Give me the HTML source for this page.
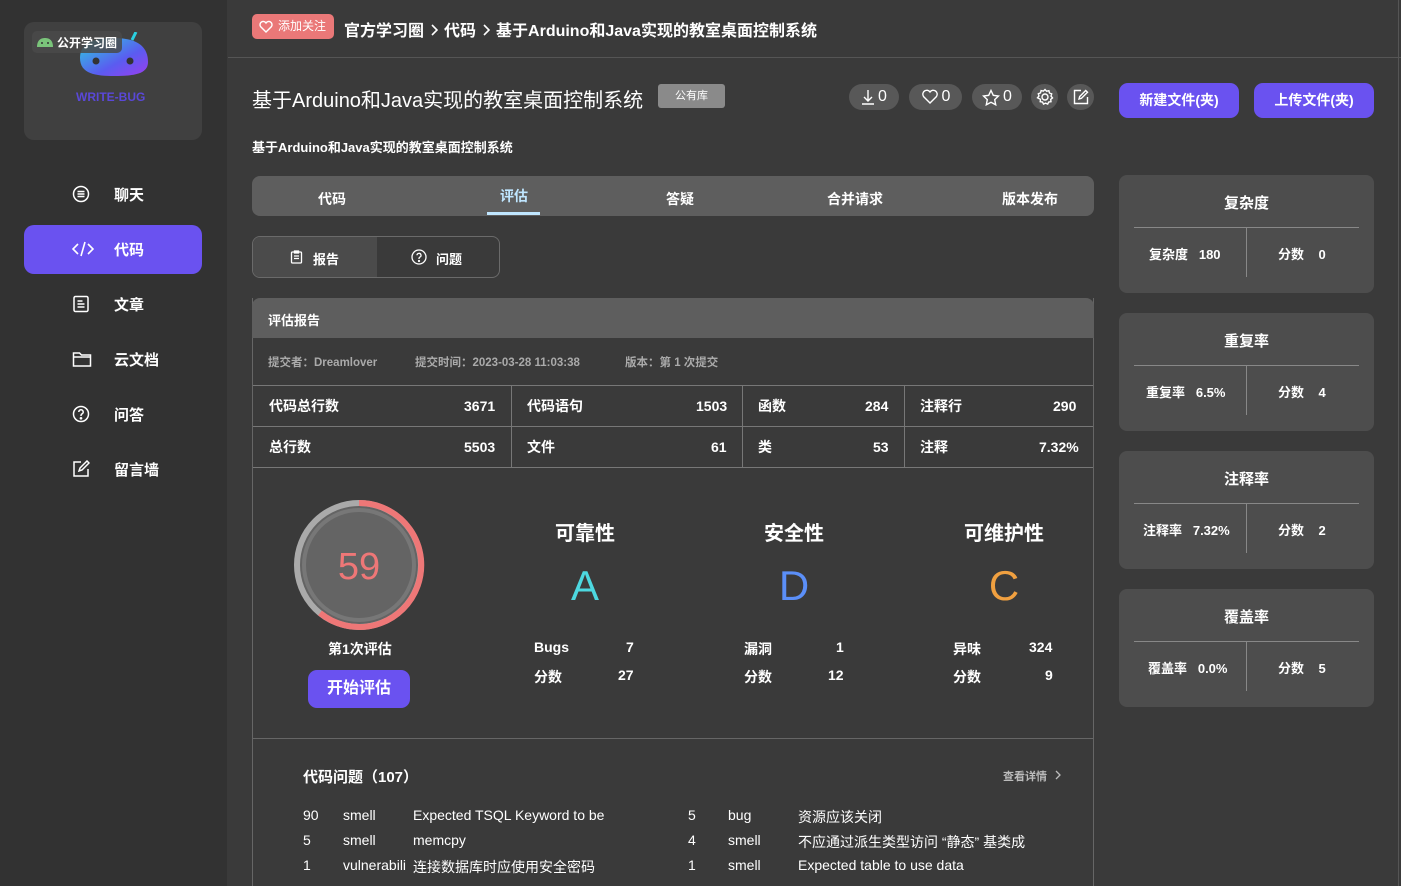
<!DOCTYPE html>
<html><head><meta charset="utf-8"><style>
*{margin:0;padding:0;box-sizing:border-box}
html,body{width:1401px;height:886px;overflow:hidden}
body{background:#3a3a3a;font-family:"Liberation Sans","Noto Sans CJK SC",sans-serif;color:#fff;position:relative}
.a{position:absolute}
.side{left:0;top:0;width:227px;height:886px;background:#323232}
.nav{left:24px;width:178px;height:49px;border-radius:10px;font-size:15px;font-weight:bold}
.nav svg{position:absolute;left:48px;top:15px}
.nav span{position:absolute;left:90px;top:14px}
.pill{height:26px;border-radius:13px;background:#585858;font-size:16px;display:flex;align-items:center;justify-content:center;gap:3px}
.btn{background:#6a52f0;border-radius:9px;font-size:14px;font-weight:bold;text-align:center;line-height:35px}
.card{left:1119px;width:255px;height:118px;background:#4d4d4d;border-radius:8px}
.card .t{position:absolute;top:17px;width:100%;text-align:center;font-size:15px;font-weight:bold}
.card .l{position:absolute;left:15px;right:15px;top:52px;border-top:1px solid #888}
.card .v{position:absolute;left:127px;top:52px;height:50px;border-left:1px solid #888}
.card .c{position:absolute;top:69px;font-size:13px;font-weight:bold}
.td{font-size:14px;font-weight:bold;top:0;line-height:40px}
.gr{font-size:22px;font-weight:bold;width:200px;text-align:center}
.sm{font-size:14px;font-weight:bold}
.iss{font-size:14px}
.chev{display:inline-block;margin:0 6px;font-weight:normal}
</style></head><body>
<div class="a side"></div>
<div class="a" style="left:24px;top:22px;width:178px;height:118px;background:#404040;border-radius:10px"></div>
<svg class="a" style="left:78px;top:32px" width="72" height="48"><defs><linearGradient id="g" x1="0" y1="0" x2="1" y2="1"><stop offset="0" stop-color="#2ad0e0"/><stop offset="0.6" stop-color="#5a5cf0"/><stop offset="1" stop-color="#9a3ef0"/></linearGradient></defs><path d="M2 26 C2 8 22 6 36 6 C52 6 70 10 70 30 C70 42 56 44 36 44 C18 44 2 42 2 26Z" fill="url(#g)"/><circle cx="18" cy="29" r="3.5" fill="#333"/><circle cx="52" cy="29" r="3.5" fill="#333"/><line x1="54" y1="8" x2="58" y2="0" stroke="#2ad0e0" stroke-width="3"/></svg>
<div class="a" style="left:32px;top:31px;width:90px;height:22px;background:rgba(74,74,74,0.85);border-radius:5px"></div>
<svg class="a" style="left:36px;top:36px" width="18" height="12"><path d="M1 11 C1 4 5 2 9 2 C13 2 17 4 17 11Z" fill="#7ac47a"/><circle cx="6" cy="7" r="1" fill="#333"/><circle cx="12" cy="7" r="1" fill="#333"/></svg>
<div class="a" style="left:57px;top:34px;font-size:12px;font-weight:bold">公开学习圈</div>
<div class="a" style="left:76px;top:90px;font-size:12px;font-weight:bold;color:#5a48d8">WRITE-BUG</div>

<div class="a nav" style="top:170px"><svg width="18" height="18" fill="none" stroke="#fff" stroke-width="1.5"><circle cx="9" cy="9" r="7.5"/><path d="M5.5 6.5h7M5.5 9h7M5.5 11.5h7"/></svg><span>聊天</span></div>
<div class="a nav" style="top:225px;background:#6a52f0"><svg width="22" height="18" fill="none" stroke="#fff" stroke-width="1.6"><path d="M6 4L1 9l5 5M16 4l5 5-5 5M13 2L9 16"/></svg><span>代码</span></div>
<div class="a nav" style="top:280px"><svg width="18" height="18" fill="none" stroke="#fff" stroke-width="1.5"><rect x="2" y="1.5" width="14" height="15" rx="1.5"/><path d="M5.5 6h5M5.5 9h7M5.5 12h7"/></svg><span>文章</span></div>
<div class="a nav" style="top:335px"><svg width="20" height="18" fill="none" stroke="#fff" stroke-width="1.5"><path d="M1.5 3h6l2 2h9v11h-17z M1.5 7h17"/></svg><span>云文档</span></div>
<div class="a nav" style="top:390px"><svg width="18" height="18" fill="none" stroke="#fff" stroke-width="1.5"><circle cx="9" cy="9" r="7.5"/><path d="M6.8 7a2.2 2.2 0 1 1 3 2c-.8.4-.8 1-.8 2"/><circle cx="9" cy="13.3" r=".6" fill="#fff"/></svg><span>问答</span></div>
<div class="a nav" style="top:445px"><svg width="18" height="18" fill="none" stroke="#fff" stroke-width="1.5"><path d="M9 2H2v14h14V9M7 11l1-3 7-7 2 2-7 7z"/></svg><span>留言墙</span></div>

<div class="a" style="left:228px;top:57px;width:1173px;border-top:1px solid #555"></div>
<div class="a" style="left:1398px;top:0;height:886px;border-left:1px solid #555"></div>
<div class="a" style="left:252px;top:14px;width:82px;height:25px;background:#ea7878;border-radius:5px;font-size:12px;line-height:25px;padding-left:26px">添加关注</div>
<svg class="a" style="left:259px;top:20px" width="14" height="13" fill="none" stroke="#fff" stroke-width="1.4"><path d="M7 12L1.5 6.5a3 3 0 0 1 5.5-3.5 3 3 0 0 1 5.5 3.5z"/></svg>
<div class="a" style="left:344px;top:17px;font-size:16px;font-weight:bold">官方学习圈<svg class="chev" width="8" height="12" fill="none" stroke="#fff" stroke-width="1.6"><path d="M2 1l5 5-5 5"/></svg>代码<svg class="chev" width="8" height="12" fill="none" stroke="#fff" stroke-width="1.6"><path d="M2 1l5 5-5 5"/></svg>基于Arduino和Java实现的教室桌面控制系统</div>

<div class="a" style="left:252px;top:84px;font-size:20px">基于Arduino和Java实现的教室桌面控制系统</div>
<div class="a" style="left:658px;top:84px;width:67px;height:24px;background:#8a8a8a;border-radius:3px;font-size:11px;text-align:center;line-height:24px">公有库</div>
<div class="a" style="left:252px;top:137px;font-size:13px;font-weight:bold">基于Arduino和Java实现的教室桌面控制系统</div>

<div class="a pill" style="left:849px;top:84px;width:50px"><svg width="14" height="16" fill="none" stroke="#fff" stroke-width="1.4"><path d="M7 1v11M3 8l4 4 4-4M1 15h12"/></svg>0</div>
<div class="a pill" style="left:909px;top:84px;width:53px"><svg width="18" height="16" fill="none" stroke="#fff" stroke-width="1.4"><path d="M9 14L2.5 7.5a3.6 3.6 0 0 1 6.5-4.5 3.6 3.6 0 0 1 6.5 4.5z"/></svg>0</div>
<div class="a pill" style="left:972px;top:84px;width:50px"><svg width="18" height="17" fill="none" stroke="#fff" stroke-width="1.4"><path d="M9 1.5l2.3 4.8 5.2.7-3.8 3.6 1 5.2L9 13.3l-4.7 2.5 1-5.2L1.5 7l5.2-.7z"/></svg>0</div>
<div class="a pill" style="left:1031px;top:84px;width:27px"><svg width="18" height="18" fill="none" stroke="#fff" stroke-width="1.4"><circle cx="9" cy="9" r="3"/><path d="M9 1.5l1.6 1.7 2.3-.5.6 2.3 2.2.9-.7 2.2 1.5 1.8-1.8 1.5.3 2.3-2.3.3-1 2.1-2.1-1-2.1 1-1-2.1-2.3-.3.3-2.3L1.5 9.8 3 8l-.7-2.2 2.2-.9.6-2.3 2.3.5z"/></svg></div>
<div class="a pill" style="left:1067px;top:84px;width:27px"><svg width="16" height="16" fill="none" stroke="#fff" stroke-width="1.4"><path d="M8 1.5H1.5v13h13V8M6 10l.7-2.5 6-6 1.8 1.8-6 6z"/></svg></div>
<div class="a btn" style="left:1119px;top:83px;width:120px">新建文件(夹)</div>
<div class="a btn" style="left:1254px;top:83px;width:120px">上传文件(夹)</div>

<div class="a" style="left:252px;top:176px;width:842px;height:40px;background:#5e5e5e;border-radius:8px"></div>
<div class="a sm" style="left:318px;top:189px">代码</div>
<div class="a sm" style="left:500px;top:186px;color:#bfe6ff">评估</div>
<div class="a" style="left:487px;top:212px;width:53px;height:3px;background:#bfe6ff"></div>
<div class="a sm" style="left:666px;top:189px">答疑</div>
<div class="a sm" style="left:827px;top:189px">合并请求</div>
<div class="a sm" style="left:1002px;top:189px">版本发布</div>

<div class="a" style="left:252px;top:236px;width:248px;height:42px;border:1px solid #6a6a6a;border-radius:8px;overflow:hidden"><div style="width:124px;height:100%;background:#4b4b4b"></div></div>
<svg class="a" style="left:290px;top:250px" width="13" height="14" fill="none" stroke="#fff" stroke-width="1.3"><rect x="1.5" y="2" width="10" height="11" rx="1"/><path d="M4.5 1h4v2h-4zM4 6h5M4 8.5h5"/></svg>
<div class="a" style="left:313px;top:249px;font-size:13px;font-weight:bold">报告</div>
<svg class="a" style="left:411px;top:249px" width="16" height="16" fill="none" stroke="#fff" stroke-width="1.3"><circle cx="8" cy="8" r="7"/><path d="M6 6.3a2 2 0 1 1 2.7 1.9c-.7.3-.7.8-.7 1.8"/><circle cx="8" cy="12" r=".5" fill="#fff"/></svg>
<div class="a" style="left:436px;top:249px;font-size:13px;font-weight:bold">问题</div>

<div class="a" style="left:252px;top:298px;width:842px;height:600px;border:1px solid #666;border-top:none"></div>
<div class="a" style="left:252px;top:298px;width:842px;height:40px;background:#5e5e5e;border-radius:8px 8px 0 0"></div>
<div class="a" style="left:268px;top:310px;font-size:13px;font-weight:bold">评估报告</div>
<div class="a" style="left:268px;top:354px;font-size:11.5px;font-weight:bold;color:#aaa">提交者：Dreamlover</div>
<div class="a" style="left:415px;top:354px;font-size:11.5px;font-weight:bold;color:#aaa">提交时间：2023-03-28 11:03:38</div>
<div class="a" style="left:625px;top:354px;font-size:11.5px;font-weight:bold;color:#aaa">版本：第 1 次提交</div>
<div class="a" style="left:253px;top:385px;width:840px;height:83px;border-top:1px solid #777;border-bottom:1px solid #777"></div>
<div class="a" style="left:253px;top:426px;width:840px;border-top:1px solid #777"></div>
<div class="a" style="left:511px;top:385px;height:83px;border-left:1px solid #777"></div>
<div class="a" style="left:742px;top:385px;height:83px;border-left:1px solid #777"></div>
<div class="a" style="left:904px;top:385px;height:83px;border-left:1px solid #777"></div>
<div class="a td" style="left:269px;top:386px">代码总行数</div><div class="a td" style="left:464px;top:386px">3671</div>
<div class="a td" style="left:527px;top:386px">代码语句</div><div class="a td" style="left:696px;top:386px">1503</div>
<div class="a td" style="left:758px;top:386px">函数</div><div class="a td" style="left:865px;top:386px">284</div>
<div class="a td" style="left:920px;top:386px">注释行</div><div class="a td" style="left:1053px;top:386px">290</div>
<div class="a td" style="left:269px;top:427px">总行数</div><div class="a td" style="left:464px;top:427px">5503</div>
<div class="a td" style="left:527px;top:427px">文件</div><div class="a td" style="left:711px;top:427px">61</div>
<div class="a td" style="left:758px;top:427px">类</div><div class="a td" style="left:873px;top:427px">53</div>
<div class="a td" style="left:920px;top:427px">注释</div><div class="a td" style="left:1039px;top:427px">7.32%</div>

<svg class="a" style="left:292px;top:497px" width="136" height="136"><circle cx="67" cy="68" r="62" fill="#646464" stroke="#aaa" stroke-width="6"/><circle cx="67" cy="68" r="55" fill="none" stroke="#777" stroke-width="4"/><path d="M67 6 A62 62 0 1 1 28 116" fill="none" stroke="#ee7777" stroke-width="6"/><text x="67" y="82" text-anchor="middle" font-size="38" fill="#ee7777" font-family="Liberation Sans,sans-serif">59</text></svg>
<div class="a sm" style="left:328px;top:639px">第1次评估</div>
<div class="a btn" style="left:308px;top:670px;width:102px;height:38px;line-height:38px;font-size:16px">开始评估</div>

<div class="a gr" style="left:485px;top:517px;font-size:20px">可靠性</div>
<div class="a" style="left:485px;top:562px;width:200px;text-align:center;font-size:42px;color:#4dd8e0">A</div>
<div class="a sm" style="left:534px;top:639px">Bugs</div><div class="a sm" style="left:626px;top:639px">7</div>
<div class="a sm" style="left:534px;top:667px">分数</div><div class="a sm" style="left:618px;top:667px">27</div>

<div class="a gr" style="left:694px;top:517px;font-size:20px">安全性</div>
<div class="a" style="left:694px;top:562px;width:200px;text-align:center;font-size:42px;color:#5b8ff8">D</div>
<div class="a sm" style="left:744px;top:639px">漏洞</div><div class="a sm" style="left:836px;top:639px">1</div>
<div class="a sm" style="left:744px;top:667px">分数</div><div class="a sm" style="left:828px;top:667px">12</div>

<div class="a gr" style="left:904px;top:517px;font-size:20px">可维护性</div>
<div class="a" style="left:904px;top:562px;width:200px;text-align:center;font-size:42px;color:#f0a040">C</div>
<div class="a sm" style="left:953px;top:639px">异味</div><div class="a sm" style="left:1029px;top:639px">324</div>
<div class="a sm" style="left:953px;top:667px">分数</div><div class="a sm" style="left:1045px;top:667px">9</div>

<div class="a" style="left:253px;top:738px;width:840px;border-top:1px solid #666"></div>
<div class="a" style="left:303px;top:766px;font-size:15px;font-weight:bold">代码问题（107）</div>
<div class="a" style="left:1003px;top:768px;font-size:11px;color:#bbb;font-weight:bold">查看详情 <svg width="8" height="10" fill="none" stroke="#bbb" stroke-width="1.3" style="margin-left:4px"><path d="M2 1l4 4-4 4"/></svg></div>
<div class="a iss" style="left:303px;top:807px">90</div><div class="a iss" style="left:343px;top:807px">smell</div><div class="a iss" style="left:413px;top:807px">Expected TSQL Keyword to be</div>
<div class="a iss" style="left:303px;top:832px">5</div><div class="a iss" style="left:343px;top:832px">smell</div><div class="a iss" style="left:413px;top:832px">memcpy</div>
<div class="a iss" style="left:303px;top:857px">1</div><div class="a iss" style="left:343px;top:857px">vulnerabili</div><div class="a iss" style="left:413px;top:857px">连接数据库时应使用安全密码</div>
<div class="a iss" style="left:688px;top:807px">5</div><div class="a iss" style="left:728px;top:807px">bug</div><div class="a iss" style="left:798px;top:807px">资源应该关闭</div>
<div class="a iss" style="left:688px;top:832px">4</div><div class="a iss" style="left:728px;top:832px">smell</div><div class="a iss" style="left:798px;top:832px">不应通过派生类型访问 “静态” 基类成</div>
<div class="a iss" style="left:688px;top:857px">1</div><div class="a iss" style="left:728px;top:857px">smell</div><div class="a iss" style="left:798px;top:857px">Expected table to use data</div>

<div class="a card" style="top:175px"><div class="t">复杂度</div><div class="l"></div><div class="v"></div><div class="c" style="left:30px">复杂度&nbsp;&nbsp;&nbsp;180</div><div class="c" style="left:159px">分数&nbsp;&nbsp;&nbsp;&nbsp;0</div></div>
<div class="a card" style="top:313px"><div class="t">重复率</div><div class="l"></div><div class="v"></div><div class="c" style="left:27px">重复率&nbsp;&nbsp;&nbsp;6.5%</div><div class="c" style="left:159px">分数&nbsp;&nbsp;&nbsp;&nbsp;4</div></div>
<div class="a card" style="top:451px"><div class="t">注释率</div><div class="l"></div><div class="v"></div><div class="c" style="left:24px">注释率&nbsp;&nbsp;&nbsp;7.32%</div><div class="c" style="left:159px">分数&nbsp;&nbsp;&nbsp;&nbsp;2</div></div>
<div class="a card" style="top:589px"><div class="t">覆盖率</div><div class="l"></div><div class="v"></div><div class="c" style="left:29px">覆盖率&nbsp;&nbsp;&nbsp;0.0%</div><div class="c" style="left:159px">分数&nbsp;&nbsp;&nbsp;&nbsp;5</div></div>
</body></html>
